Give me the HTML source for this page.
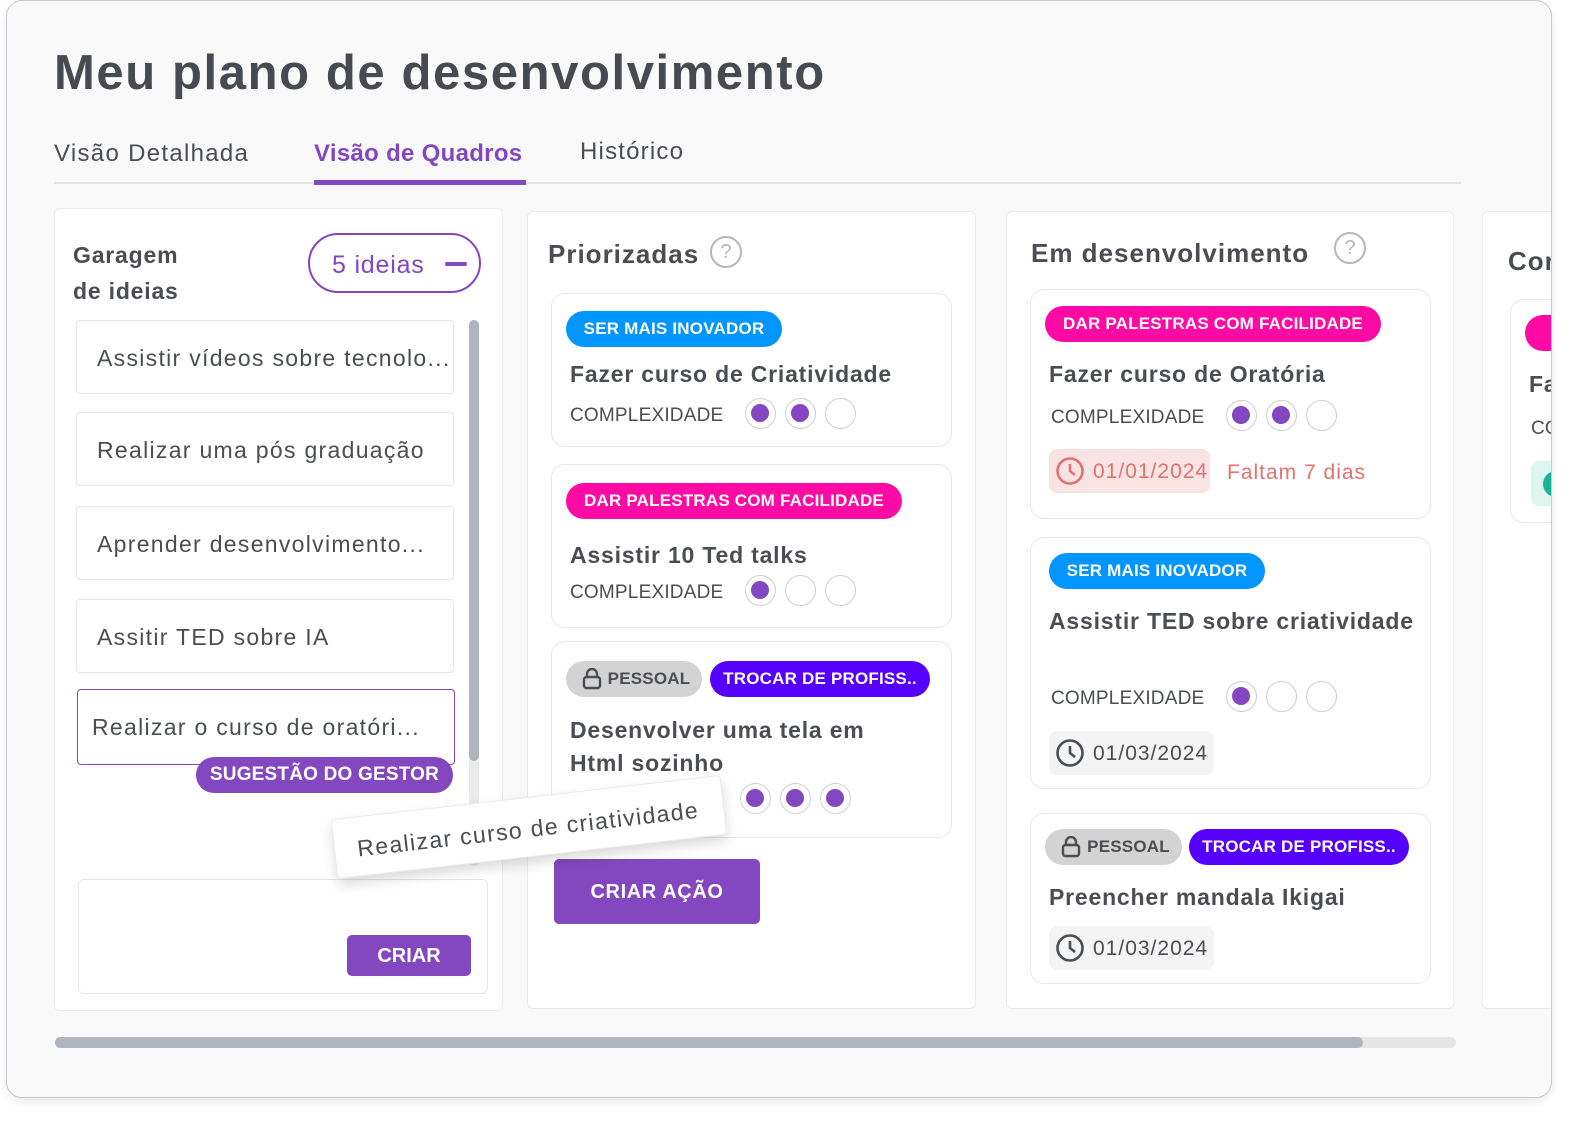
<!DOCTYPE html>
<html><head><meta charset="utf-8"><style>
*{box-sizing:border-box;margin:0;padding:0}
body{width:1581px;height:1125px;background:#fff;font-family:"Liberation Sans",sans-serif;color:#4a4d52;position:relative;overflow:hidden}
.frame{position:absolute;left:6px;top:0;width:1546px;height:1098px;border:1.5px solid #c6cad0;border-radius:16px;background:#f9f9f9;overflow:hidden;box-shadow:0 4px 8px rgba(0,0,0,.08)}
.a{position:absolute;white-space:nowrap}
.col{position:absolute;background:#fff;border:1px solid #ebebeb;border-radius:6px}
.card{position:absolute;background:#fff;border:1.5px solid #e8e8e8;border-radius:14px}
.badge{position:absolute;height:36px;border-radius:18px;color:#fff;font-weight:bold;font-size:17px;line-height:36px;text-align:center;letter-spacing:.2px}
.idea{position:absolute;left:75px;width:378px;height:74px;background:#fff;border:1.5px solid #e6e6e6;border-radius:4px;font-size:23px;padding-left:20px;line-height:74px;color:#4a4d52;letter-spacing:1.3px;white-space:nowrap;overflow:hidden}
.cx{font-size:19px;color:#4a4d52;letter-spacing:.2px}
.dot{position:absolute;width:31px;height:31px;border-radius:50%;border:1.5px solid #cfcfcf;background:#fff}
.dot.f::after{content:"";position:absolute;left:5px;top:5px;width:18px;height:18px;border-radius:50%;background:#8347bf}
.ttl{font-size:23px;font-weight:bold;color:#4a4d52;letter-spacing:.8px}
.date{position:absolute;height:44px;border-radius:8px;background:#f4f4f4;font-size:21px;line-height:46px;padding-left:44px;letter-spacing:1px}
.date svg{position:absolute;left:6px;top:7px}
.h2{font-size:26px;font-weight:bold;letter-spacing:1px}
</style></head><body>
<div class="frame">
<div class="a" style="left:47px;top:44px;font-size:49px;font-weight:bold;color:#474a50;letter-spacing:1.6px">Meu plano de desenvolvimento</div>
<div class="a" style="left:47px;top:139px;font-size:24px;letter-spacing:1.3px">Visão Detalhada</div>
<div class="a" style="left:307px;top:139px;font-size:24px;font-weight:bold;color:#8347bf;letter-spacing:.3px">Visão de Quadros</div>
<div class="a" style="left:573px;top:137px;font-size:24px;letter-spacing:1.2px">Histórico</div>
<div class="a" style="left:47px;top:181px;width:1407px;height:1.5px;background:#e3e3e3"></div>
<div class="a" style="left:307px;top:179px;width:212px;height:5px;background:#8347bf"></div>

<!-- col1 -->
<div class="col" style="left:47px;top:207px;width:449px;height:803px"></div>
<div class="a" style="left:66px;top:236px;font-size:23px;font-weight:bold;line-height:36px;letter-spacing:.8px">Garagem<br>de ideias</div>
<div class="a" style="left:301px;top:232px;width:173px;height:60px;border:2px solid #8347bf;border-radius:30px;color:#8347bf;font-size:25px;line-height:60px;padding-left:22px;letter-spacing:.8px">5 ideias<span style="position:absolute;left:135px;top:27px;width:22px;height:4px;background:#8347bf;border-radius:2px"></span></div>
<div class="a" style="left:462px;top:319px;width:10px;height:546px;border-radius:5px;background:#eaeaea"></div>
<div class="a" style="left:462px;top:319px;width:10px;height:441px;border-radius:5px;background:#b0b5bd"></div>
<div class="idea" style="left:69px;top:319px">Assistir vídeos sobre tecnolo...</div>
<div class="idea" style="left:69px;top:411px">Realizar uma pós graduação</div>
<div class="idea" style="left:69px;top:505px">Aprender desenvolvimento...</div>
<div class="idea" style="left:69px;top:598px">Assitir TED sobre IA</div>
<div class="idea" style="left:70px;top:688px;height:76px;border-color:#8347bf;padding-left:14px">Realizar o curso de oratóri...</div>
<div class="badge" style="left:189px;top:756px;width:257px;background:#8347bf;font-size:19px">SUGESTÃO DO GESTOR</div>
<div class="a" style="left:71px;top:878px;width:410px;height:115px;background:#fff;border:1.5px solid #e6e6e6;border-radius:6px"></div>
<div class="a" style="left:340px;top:934px;width:124px;height:41px;background:#8347bf;border-radius:5px;color:#fff;font-weight:bold;font-size:20px;line-height:43px;text-align:center">CRIAR</div>

<!-- col2 -->
<div class="col" style="left:520px;top:210px;width:449px;height:798px"></div>
<div class="a h2" style="left:541px;top:238px">Priorizadas</div>
<div class="a" style="left:703px;top:235px;width:32px;height:32px;border:2.5px solid #b4b8be;border-radius:50%;color:#b4b8be;font-size:20px;line-height:28px;text-align:center">?</div>
<div class="card" style="left:544px;top:292px;width:401px;height:154px"></div>
<div class="badge" style="left:559px;top:310px;width:216px;background:#0095ff">SER MAIS INOVADOR</div>
<div class="a ttl" style="left:563px;top:360px">Fazer curso de Criatividade</div>
<div class="a cx" style="left:563px;top:404px">COMPLEXIDADE</div>
<div class="dot f" style="left:738px;top:397px"></div><div class="dot f" style="left:778px;top:397px"></div><div class="dot" style="left:818px;top:397px"></div>

<div class="card" style="left:544px;top:463px;width:401px;height:164px"></div>
<div class="badge" style="left:559px;top:482px;width:336px;background:#ff0aa5">DAR PALESTRAS COM FACILIDADE</div>
<div class="a ttl" style="left:563px;top:541px">Assistir 10 Ted talks</div>
<div class="a cx" style="left:563px;top:581px">COMPLEXIDADE</div>
<div class="dot f" style="left:738px;top:574px"></div><div class="dot" style="left:778px;top:574px"></div><div class="dot" style="left:818px;top:574px"></div>

<div class="card" style="left:544px;top:640px;width:401px;height:197px"></div>
<div class="badge" style="left:559px;top:660px;width:136px;background:#d3d3d3;color:#4a4d52;padding-left:30px">PESSOAL<svg style="position:absolute;left:16px;top:7px" width="20" height="22" viewBox="0 0 20 22" fill="none" stroke="#4a4d52" stroke-width="2.4"><rect x="2" y="9" width="16" height="11" rx="2.5"/><path d="M5 9V6a5 5 0 0 1 10 0v3"/></svg></div>
<div class="badge" style="left:703px;top:660px;width:220px;background:#5500ff">TROCAR DE PROFISS..</div>
<div class="a ttl" style="left:563px;top:713px;line-height:33px">Desenvolver uma tela em<br>Html sozinho</div>
<div class="dot f" style="left:733px;top:782px"></div><div class="dot f" style="left:773px;top:782px"></div><div class="dot f" style="left:813px;top:782px"></div>
<div class="a" style="left:547px;top:858px;width:206px;height:65px;background:#8347bf;border-radius:5px;color:#fff;font-weight:bold;font-size:20px;line-height:67px;text-align:center;letter-spacing:.6px">CRIAR AÇÃO</div>

<!-- col3 -->
<div class="col" style="left:999px;top:210px;width:448px;height:798px"></div>
<div class="a h2" style="left:1024px;top:237px">Em desenvolvimento</div>
<div class="a" style="left:1327px;top:231px;width:32px;height:32px;border:2.5px solid #b4b8be;border-radius:50%;color:#b4b8be;font-size:20px;line-height:28px;text-align:center">?</div>
<div class="card" style="left:1023px;top:288px;width:401px;height:230px"></div>
<div class="badge" style="left:1038px;top:305px;width:336px;background:#ff0aa5">DAR PALESTRAS COM FACILIDADE</div>
<div class="a ttl" style="left:1042px;top:360px">Fazer curso de Oratória</div>
<div class="a cx" style="left:1044px;top:406px">COMPLEXIDADE</div>
<div class="dot f" style="left:1219px;top:399px"></div><div class="dot f" style="left:1259px;top:399px"></div><div class="dot" style="left:1299px;top:399px"></div>
<div class="date" style="left:1042px;top:448px;width:161px;background:#fae3e3;color:#e07272"><svg width="30" height="30" viewBox="0 0 30 30" fill="none" stroke="#e07272" stroke-width="2.6"><circle cx="15" cy="15" r="12.5"/><path d="M15 8v7l5 4"/></svg>01/01/2024</div>
<div class="a" style="left:1220px;top:460px;font-size:21px;color:#e07272;letter-spacing:1px">Faltam 7 dias</div>

<div class="card" style="left:1023px;top:536px;width:401px;height:252px"></div>
<div class="badge" style="left:1042px;top:552px;width:216px;background:#0095ff">SER MAIS INOVADOR</div>
<div class="a ttl" style="left:1042px;top:607px">Assistir TED sobre criatividade</div>
<div class="a cx" style="left:1044px;top:687px">COMPLEXIDADE</div>
<div class="dot f" style="left:1219px;top:680px"></div><div class="dot" style="left:1259px;top:680px"></div><div class="dot" style="left:1299px;top:680px"></div>
<div class="date" style="left:1042px;top:730px;width:165px"><svg width="30" height="30" viewBox="0 0 30 30" fill="none" stroke="#4a4d52" stroke-width="2.6"><circle cx="15" cy="15" r="12.5"/><path d="M15 8v7l5 4"/></svg>01/03/2024</div>

<div class="card" style="left:1023px;top:812px;width:401px;height:171px"></div>
<div class="badge" style="left:1038px;top:828px;width:137px;background:#d3d3d3;color:#4a4d52;padding-left:30px">PESSOAL<svg style="position:absolute;left:16px;top:7px" width="20" height="22" viewBox="0 0 20 22" fill="none" stroke="#4a4d52" stroke-width="2.4"><rect x="2" y="9" width="16" height="11" rx="2.5"/><path d="M5 9V6a5 5 0 0 1 10 0v3"/></svg></div>
<div class="badge" style="left:1182px;top:828px;width:220px;background:#5500ff">TROCAR DE PROFISS..</div>
<div class="a ttl" style="left:1042px;top:883px">Preencher mandala Ikigai</div>
<div class="date" style="left:1042px;top:925px;width:165px"><svg width="30" height="30" viewBox="0 0 30 30" fill="none" stroke="#4a4d52" stroke-width="2.6"><circle cx="15" cy="15" r="12.5"/><path d="M15 8v7l5 4"/></svg>01/03/2024</div>

<!-- col4 -->
<div class="col" style="left:1475px;top:210px;width:200px;height:798px"></div>
<div class="a h2" style="left:1501px;top:245px">Con</div>
<div class="card" style="left:1503px;top:298px;width:200px;height:224px"></div>
<div class="badge" style="left:1518px;top:314px;width:100px;background:#ff0aa5"></div>
<div class="a ttl" style="left:1522px;top:370px">Fa</div>
<div class="a cx" style="left:1524px;top:417px">CO</div>
<div class="a" style="left:1524px;top:460px;width:60px;height:45px;border-radius:8px;background:#dff5f0"><span style="position:absolute;left:12px;top:10px;width:26px;height:26px;border-radius:50%;background:#1ab394"></span></div>

<!-- scrollbar -->
<div class="a" style="left:48px;top:1036px;width:1401px;height:11px;border-radius:6px;background:#e6e6e6"></div>
<div class="a" style="left:48px;top:1036px;width:1308px;height:11px;border-radius:6px;background:#b0b5bd"></div>

<!-- dragged card -->
<div class="a" style="left:326px;top:796px;width:392px;height:60px;background:#fff;border:1px solid #ececec;border-radius:4px;transform:rotate(-6.5deg);box-shadow:0 6px 12px rgba(0,0,0,.15);font-size:23px;line-height:62px;padding-left:22px;color:#4a4d52;letter-spacing:1.4px">Realizar curso de criatividade</div>
</div>
</body></html>
